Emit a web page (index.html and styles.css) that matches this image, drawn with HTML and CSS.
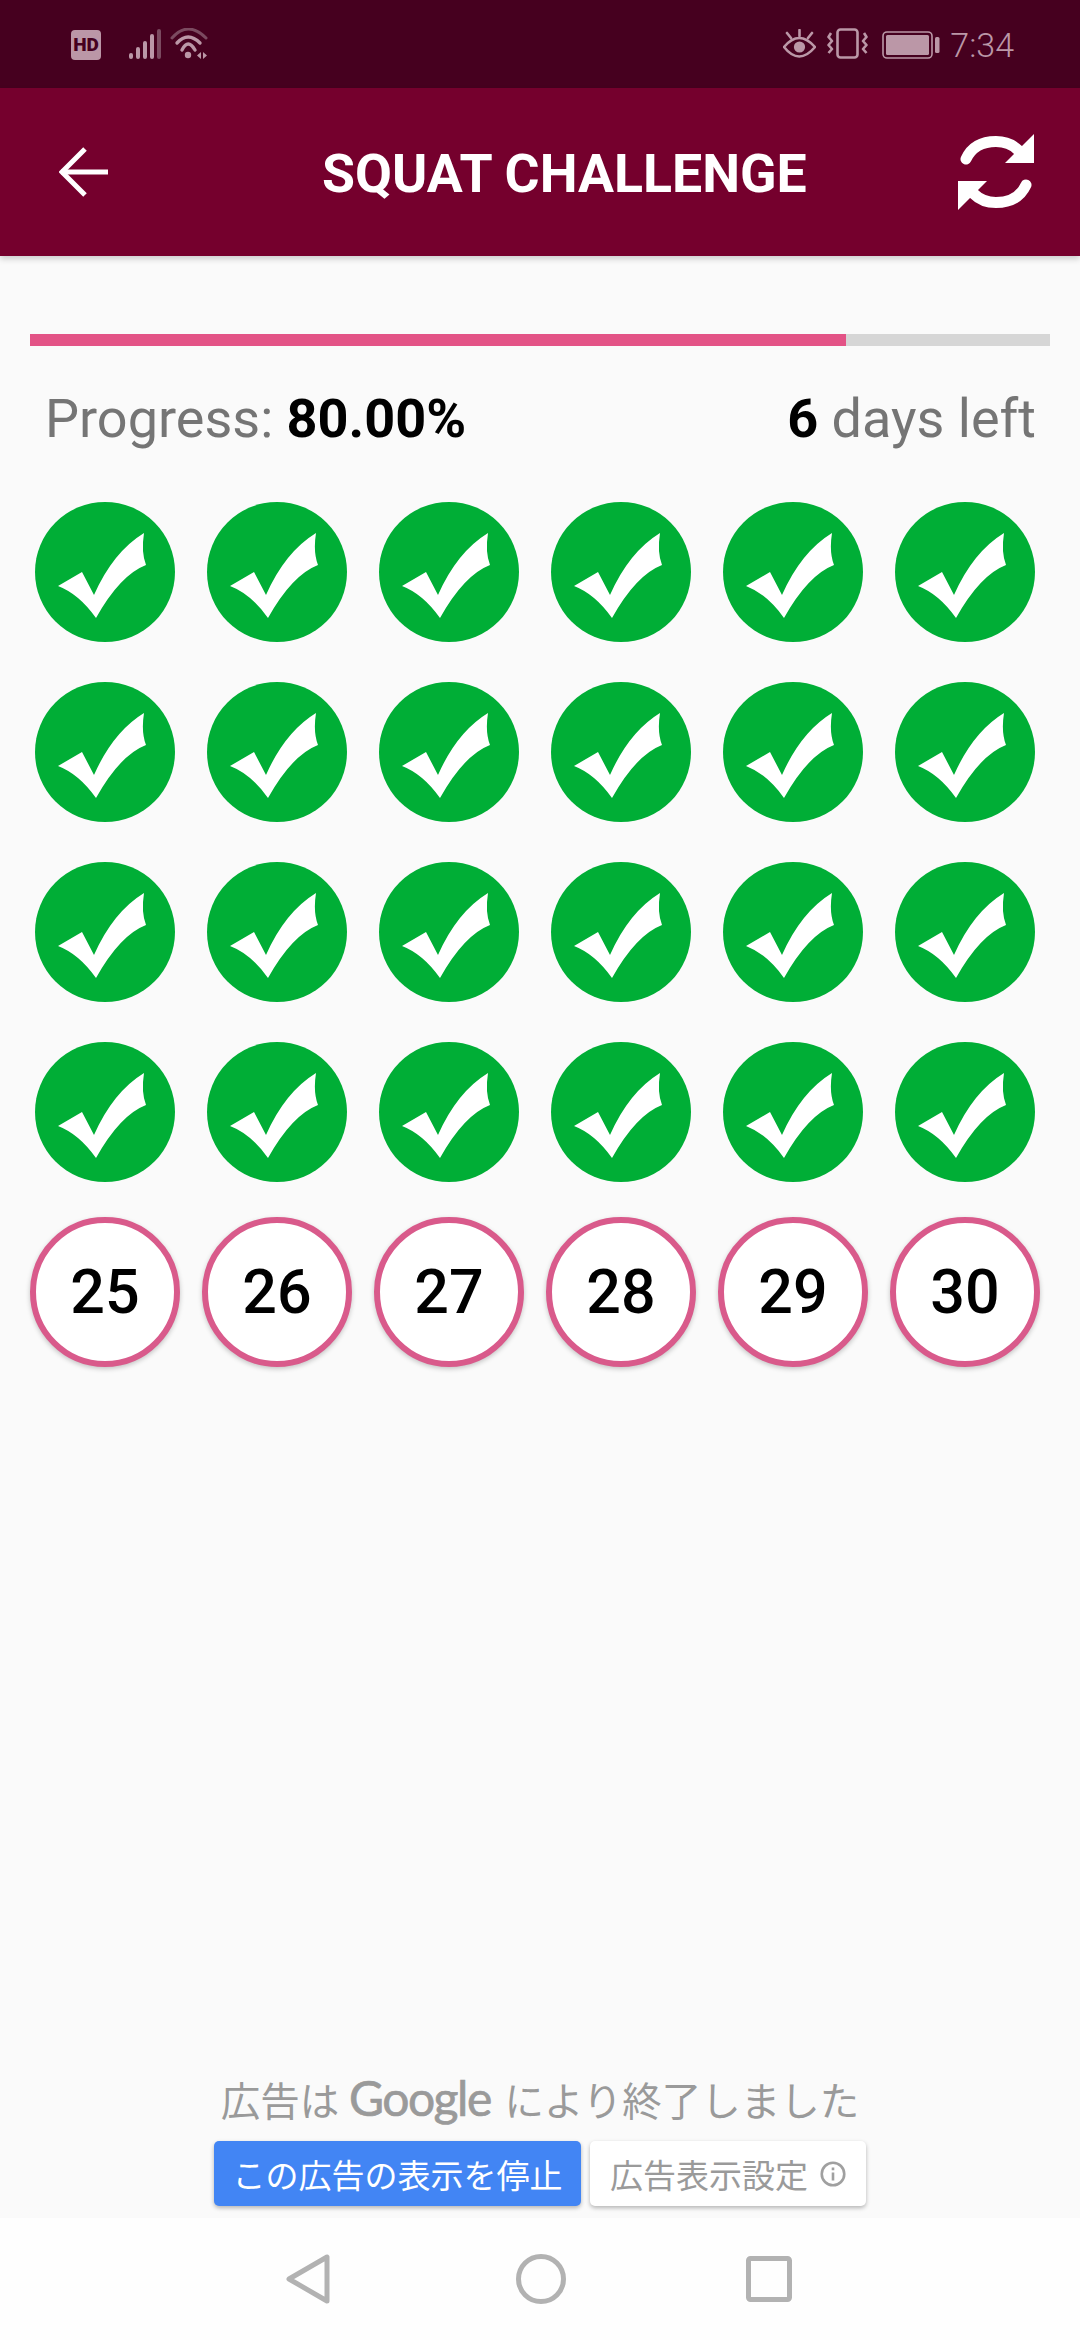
FILE: index.html
```html
<!DOCTYPE html>
<html lang="ja">
<head>
<meta charset="utf-8">
<title>Squat Challenge</title>
<link rel="stylesheet" href="styles.css">
</head>
<body>
<svg class="defs" width="0" height="0" aria-hidden="true">
  <symbol id="tick" viewBox="0 0 140 140">
    <circle cx="70" cy="70" r="70" fill="#00ae36"/>
    <path fill="#fff" d="M23 84 L47 70 L59 93 Q78 50 109 31 Q106 50 111 63 Q85 73 61 116 Q44 92 23 84Z"/>
  </symbol>
  <symbol id="sync-half" viewBox="0 0 76 76">
    <path d="M8 25 C14 12 26 7.5 38 7.5 C46 7.5 54 10 60 16" fill="none" stroke="#fff" stroke-width="11" stroke-linecap="round"/>
    <path d="M76 0 V29 H47Z" fill="#fff"/>
  </symbol>
</svg>

<header class="status">
  <div class="status-group">
    <span class="hd">HD</span>
    <svg class="ic-signal" width="32" height="31" viewBox="0 0 32 31">
      <rect x="0" y="24" width="4" height="6" rx="2" fill="#bb97a7"/>
      <rect x="7" y="18" width="4" height="12" rx="2" fill="#bb97a7"/>
      <rect x="14" y="12" width="4" height="18" rx="2" fill="#bb97a7"/>
      <rect x="21" y="5" width="4" height="25" rx="2" fill="#bb97a7"/>
      <rect x="28" y="0" width="4" height="30" rx="2" fill="#7b4a60"/>
    </svg>
    <svg class="ic-wifi" width="38" height="32" viewBox="0 0 38 32" fill="none">
      <path d="M2 10 Q18 -8 36 10" stroke="#7b4a60" stroke-width="3" stroke-linecap="round"/>
      <path d="M7 15 Q18 3 30 15" stroke="#bb97a7" stroke-width="3.4" stroke-linecap="round"/>
      <path d="M12 22 Q18 10 25 22" stroke="#bb97a7" stroke-width="3.4" stroke-linecap="round"/>
      <circle cx="18" cy="27" r="3.2" fill="#bb97a7"/>
      <path d="M31 24 L27 27.5 L31 31Z M33 24 L37 27.5 L33 31Z" fill="#bb97a7"/>
    </svg>
  </div>
  <div class="status-group status-right">
    <svg class="ic-eye" width="33" height="30" viewBox="0 0 33 30" fill="none" stroke="#bb97a7" stroke-width="2.6">
      <path d="M1 18 Q16 0 32 18 Q16 37 1 18Z"/>
      <circle cx="16.5" cy="18" r="5.6" fill="#bb97a7" stroke="none"/>
      <path d="M16.5 1 V7 M4 4 L8 9 M29 4 L25 9" stroke-linecap="round"/>
    </svg>
    <svg class="ic-vibrate" width="41" height="31" viewBox="0 0 41 31" fill="none" stroke="#bb97a7" stroke-width="2.6">
      <rect x="10.5" y="1.5" width="20" height="28" rx="3"/>
      <path d="M4 5 L1.5 9 L5 13 L1.5 17 L5 21 L1.5 25" stroke-linejoin="round"/>
      <path d="M37 5 L39.5 9 L36 13 L39.5 17 L36 21 L39.5 25" stroke-linejoin="round"/>
    </svg>
    <svg class="ic-battery" width="58" height="28" viewBox="0 0 58 28">
      <rect x="1" y="1" width="49" height="26" rx="4" fill="none" stroke="#bb97a7" stroke-width="1.6"/>
      <rect x="4" y="4" width="43" height="20" rx="1.5" fill="#bb97a7"/>
      <rect x="53" y="6" width="4.5" height="16" rx="1.5" fill="#bb97a7"/>
    </svg>
    <span class="time">7:34</span>
  </div>
</header>

<div class="appbar">
  <svg class="back" width="50" height="50" viewBox="0 0 50 50" fill="none" stroke="#fff" stroke-width="5">
    <path d="M2 25 H49"/>
    <path d="M26 2 L3 25 L26 48"/>
  </svg>
  <h1 class="title">SQUAT CHALLENGE</h1>
  <svg class="sync" width="76" height="76" viewBox="0 0 76 76">
    <use href="#sync-half" width="76" height="76"/>
    <use href="#sync-half" width="76" height="76" transform="rotate(180 38 38)"/>
  </svg>
</div>

<main class="main">
  <div class="track"><div class="fill" style="width:80%"></div></div>
  <div class="progress-row">
    <span>Progress: <b>80.00%</b></span>
    <span><b>6</b> days left</span>
  </div>
  <div class="grid">
    <svg class="done"><use href="#tick"/></svg><svg class="done"><use href="#tick"/></svg><svg class="done"><use href="#tick"/></svg><svg class="done"><use href="#tick"/></svg><svg class="done"><use href="#tick"/></svg><svg class="done"><use href="#tick"/></svg>
    <svg class="done"><use href="#tick"/></svg><svg class="done"><use href="#tick"/></svg><svg class="done"><use href="#tick"/></svg><svg class="done"><use href="#tick"/></svg><svg class="done"><use href="#tick"/></svg><svg class="done"><use href="#tick"/></svg>
    <svg class="done"><use href="#tick"/></svg><svg class="done"><use href="#tick"/></svg><svg class="done"><use href="#tick"/></svg><svg class="done"><use href="#tick"/></svg><svg class="done"><use href="#tick"/></svg><svg class="done"><use href="#tick"/></svg>
    <svg class="done"><use href="#tick"/></svg><svg class="done"><use href="#tick"/></svg><svg class="done"><use href="#tick"/></svg><svg class="done"><use href="#tick"/></svg><svg class="done"><use href="#tick"/></svg><svg class="done"><use href="#tick"/></svg>
    <div class="day">25</div><div class="day">26</div><div class="day">27</div><div class="day">28</div><div class="day">29</div><div class="day">30</div>
  </div>
  <div class="ad">
    <p class="ad-title">広告は <span class="google">Google</span> により終了しました</p>
    <div class="ad-buttons">
      <button class="ad-btn ad-stop">この広告の表示を停止</button>
      <button class="ad-btn ad-settings">広告表示設定
        <svg class="info" width="26" height="26" viewBox="0 0 24 24" fill="none" stroke="#a0a0a0" stroke-width="2.4">
          <circle cx="12" cy="12" r="10.4"/>
          <path d="M12 10.5 V18 M12 6 V8.5"/>
        </svg>
      </button>
    </div>
  </div>
</main>

<nav class="navbar">
  <svg class="nav-back" width="44" height="50" viewBox="0 0 44 50" fill="none" stroke="#b2b2b2" stroke-width="5" stroke-linejoin="round">
    <path d="M41 3 V47 L3 25Z"/>
  </svg>
  <svg class="nav-home" width="50" height="50" viewBox="0 0 50 50" fill="none" stroke="#b2b2b2" stroke-width="5">
    <circle cx="25" cy="25" r="22.5"/>
  </svg>
  <svg class="nav-recent" width="46" height="46" viewBox="0 0 46 46" fill="none" stroke="#b2b2b2" stroke-width="5">
    <rect x="2.5" y="2.5" width="41" height="41" rx="2"/>
  </svg>
</nav>
</body>
</html>
```
FILE: styles.css
```css
* { box-sizing: border-box; }
html, body { margin: 0; padding: 0; }
body {
  width: 1080px;
  height: 2340px;
  display: flex;
  flex-direction: column;
  background: #fafafa;
  font-family: Roboto, "Noto Sans CJK JP", sans-serif;
  overflow: hidden;
}
.defs { position: absolute; }

.status {
  height: 88px;
  flex: none;
  background: #46001f;
  display: flex;
  justify-content: space-between;
  align-items: flex-start;
  padding: 28px 66px 0 71px;
}
.status-group { display: flex; align-items: flex-start; }
.hd {
  width: 30px;
  height: 30px;
  margin-top: 2px;
  border-radius: 4px;
  background: #bb97a7;
  color: #46001f;
  font-size: 19px;
  font-weight: 900;
  line-height: 30px;
  text-align: center;
}
.ic-signal { margin: 1px 0 0 28px; }
.ic-wifi { margin-left: 9px; }
.ic-eye { margin-top: 1px; }
.ic-vibrate { margin-left: 11px; }
.ic-battery { margin: 3px 0 0 14px; }
.time {
  margin-left: 10px;
  font-size: 34px;
  font-weight: 300;
  line-height: 34px;
  color: #bb97a7;
}

.appbar {
  height: 168px;
  flex: none;
  background: #75002d;
  box-shadow: 0 3px 6px rgba(0, 0, 0, .18);
  position: relative;
  display: flex;
  align-items: center;
  padding: 0 46px 0 59px;
}
.title {
  margin: 3px 0 0 213px;
  font-size: 53.6px;
  font-weight: 700;
  color: #fff;
  white-space: nowrap;
}
.sync { margin-left: auto; }
.main {
  flex: 1;
  display: flex;
  flex-direction: column;
  padding: 78px 30px 0;
  min-height: 0;
}
.track { height: 12px; flex: none; background: #d6d6d6; }
.fill { height: 100%; background: #e35386; }
.progress-row {
  display: flex;
  justify-content: space-between;
  margin-top: 39px;
  padding: 0 14px 0 15px;
  font-size: 54px;
  line-height: 68px;
  color: #757575;
}
.progress-row b { font-weight: 700; color: #000; }
.grid {
  margin: 29px -11px 0;
  display: grid;
  grid-template-columns: repeat(6, 172px);
  grid-auto-rows: 180px;
  place-items: center;
}
.done {
  width: 140px;
  height: 140px;
}
.day {
  width: 150px;
  height: 150px;
  border-radius: 50%;
  border: 6px solid #d95a8b;
  background: #fff;
  box-shadow: 0 2px 5px rgba(0, 0, 0, .22);
  display: flex;
  align-items: center;
  justify-content: center;
  font-size: 61px;
  font-weight: 500;
  color: #000;
}

.ad {
  margin-top: auto;
  display: flex;
  flex-direction: column;
  align-items: center;
  padding-bottom: 12px;
}
.ad-title {
  margin: 0;
  font-size: 39.5px;
  line-height: 54px;
  color: #9a9a9a;
  white-space: nowrap;
}
.google {
  font-family: Lato, sans-serif;
  font-size: 48px;
  font-weight: 400;
  letter-spacing: -1.5px;
  margin-right: 4px;
  -webkit-text-stroke: .7px #9a9a9a;
}
.ad-buttons { display: flex; gap: 9px; margin-top: 11px; }
.ad-btn {
  height: 65px;
  border: 0;
  border-radius: 5px;
  font-family: inherit;
  font-size: 33px;
  white-space: nowrap;
  box-shadow: 0 2px 4px rgba(0, 0, 0, .28);
}
.ad-stop { width: 367px; background: #4285f4; color: #fff; padding: 0; }
.ad-settings {
  width: 276px;
  background: #fff;
  color: #9a9a9a;
  padding: 0;
  display: flex;
  align-items: center;
  justify-content: center;
  gap: 12px;
}
.navbar {
  height: 122px;
  flex: none;
  background: #fefefe;
  display: flex;
  align-items: flex-start;
  padding: 36px 0 0 286px;
}
.nav-home { margin-left: 186px; }
.nav-recent { margin: 2px 0 0 180px; }
```
